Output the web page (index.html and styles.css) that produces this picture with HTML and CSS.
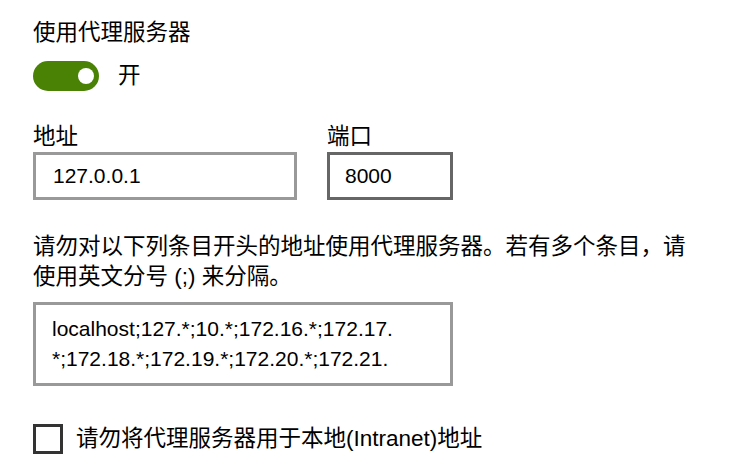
FILE: index.html
```html
<!DOCTYPE html>
<html lang="zh-CN">
<head>
<meta charset="utf-8">
<title>代理</title>
<link rel="stylesheet" href="styles.css">
</head>
<body>
<main class="page">
  <h1 class="title">使用代理服务器</h1>
  <div class="toggle-row">
    <span class="toggle"><span class="knob"></span></span>
    <span class="toggle-label">开</span>
  </div>
  <div class="fields">
    <div class="field">
      <div class="field-label">地址</div>
      <div class="box addr">127.0.0.1</div>
    </div>
    <div class="field">
      <div class="field-label">端口</div>
      <div class="box port">8000</div>
    </div>
  </div>
  <p class="desc">请勿对以下列条目开头的地址使用代理服务器。若有多个条目，请<br>使用英文分号 (;) 来分隔。</p>
  <div class="area">
    <div class="line">localhost;127.*;10.*;172.16.*;172.17.</div>
    <div class="line">*;172.18.*;172.19.*;172.20.*;172.21.</div>
  </div>
  <label class="check-row">
    <span class="checkbox"></span>
    <span class="check-label">请勿将代理服务器用于本地(Intranet)地址</span>
  </label>
</main>
</body>
</html>
```

FILE: styles.css
```css
html, body {
  margin: 0;
  padding: 0;
  background: #ffffff;
}
body {
  font-family: "Liberation Sans", "Noto Sans CJK SC", sans-serif;
  font-size: 22.5px;
  color: #000000;
  overflow: hidden;
}
.page {
  padding: 18px 0 0 33px;
}
.title {
  margin: 0;
  font-size: 22.5px;
  font-weight: normal;
  line-height: 30px;
}
.toggle-row {
  display: flex;
  align-items: center;
  gap: 19px;
  margin-top: 13px;
  height: 30px;
}
.toggle {
  position: relative;
  width: 66px;
  height: 30px;
  border-radius: 15px;
  background: #498205;
}
.knob {
  position: absolute;
  left: 45px;
  top: 7px;
  width: 16px;
  height: 16px;
  border-radius: 50%;
  background: #ffffff;
}
.toggle-label {
  line-height: 30px;
}
.fields {
  display: flex;
  gap: 30px;
  margin-top: 31px;
}
.field-label {
  line-height: 30px;
}
.box {
  box-sizing: border-box;
  height: 48px;
  border: 3px solid #999999;
  padding-left: 17px;
  font-size: 21px;
  line-height: 42px;
}
.addr {
  width: 264px;
}
.port {
  width: 126px;
  border-color: #666666;
  padding-left: 15px;
}
.desc {
  margin: 32px 0 0 0;
  line-height: 30px;
}
.area {
  box-sizing: border-box;
  width: 420px;
  height: 84px;
  margin-top: 10px;
  border: 3px solid #999999;
  padding: 9px 0 0 16px;
  font-size: 21px;
  line-height: 30px;
  overflow: hidden;
}
.line {
  white-space: nowrap;
}
.check-row {
  display: flex;
  align-items: center;
  gap: 13px;
  margin-top: 38px;
}
.checkbox {
  box-sizing: border-box;
  width: 30px;
  height: 30px;
  border: 3px solid #333333;
}
.check-label {
  line-height: 30px;
}
```
